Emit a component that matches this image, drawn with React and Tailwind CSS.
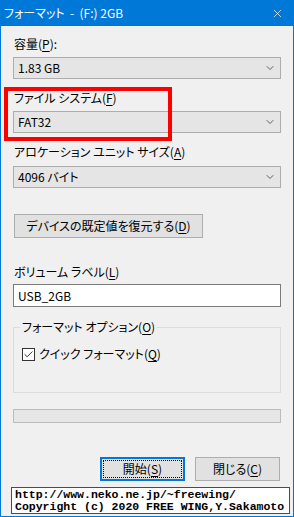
import { Check, ChevronDown, X } from 'lucide-react';

// Windows 10 "Format" dialog with an annotation box and copyright footer

const U = ({ children }) => <span className="underline underline-offset-2">{children}</span>;

function Combo({ value }) {
  return (
    <div className="flex h-[22px] items-center justify-between border border-[#adadad] bg-[#e5e5e5] pl-[4px] pr-[4px]">
      <span className="leading-none">{value}</span>
      <ChevronDown className="h-[12px] w-[12px] text-[#333]" strokeWidth={1.5} />
    </div>
  );
}

function Label({ children, className = '' }) {
  return <div className={`h-[16px] pl-[1px] leading-[16px] ${className}`}>{children}</div>;
}

export default function App() {
  return (
    <div className="relative flex h-[517px] w-[294px] flex-col border-x border-b border-[#0078d7] bg-[#f0f0f0] text-[12px] text-black [font-family:'Noto_Sans_CJK_JP','Noto_Sans',sans-serif] [font-feature-settings:'palt']">
      {/* title bar */}
      <div className="flex h-[26px] shrink-0 items-center justify-between bg-[#0078d7] pl-[3px] pr-[9px] text-white">
        <span className="leading-none">フォーマット&nbsp; -&nbsp; (F:) 2GB</span>
        <X className="h-[13px] w-[13px]" strokeWidth={1.3} />
      </div>

      <div className="flex flex-col px-[12px]">
        <Label className="mt-[10px]">
          容量(<U>P</U>):
        </Label>
        <div className="mt-[5px]">
          <Combo value="1.83 GB" />
        </div>

        <Label className="mt-[11px]">
          ファイル システム(<U>F</U>)
        </Label>
        <div className="mt-[5px]">
          <Combo value="FAT32" />
        </div>

        <Label className="mt-[11px]">
          アロケーション ユニット サイズ(<U>A</U>)
        </Label>
        <div className="mt-[6px]">
          <Combo value="4096 バイト" />
        </div>

        <button className="mt-[26px] ml-[1px] flex h-[24px] w-[189px] items-center justify-center border border-[#adadad] bg-[#e1e1e1]">
          デバイスの既定値を復元する(<U>D</U>)
        </button>

        <Label className="mt-[26px]">
          ボリューム ラベル(<U>L</U>)
        </Label>
        <div className="mt-[4px] flex h-[23px] items-center border border-[#7a7a7a] bg-white pl-[4px]">
          USB_2GB
        </div>

        {/* format options group */}
        <div className="relative mt-[20px] h-[66px] border border-[#dcdcdc]">
          <span className="absolute left-[6px] top-[-9px] bg-[#f0f0f0] px-[2px] leading-[16px]">
            フォーマット オプション(<U>O</U>)
          </span>
          <div className="mt-[18px] ml-[8px] flex items-center gap-[4px]">
            <span className="flex h-[13px] w-[13px] items-center justify-center border border-[#333] bg-white">
              <Check className="h-[11px] w-[11px] text-[#222]" strokeWidth={2} />
            </span>
            <span className="leading-[16px]">
              クイック フォーマット(<U>Q</U>)
            </span>
          </div>
        </div>

        {/* progress bar */}
        <div className="mt-[16px] h-[14px] border border-[#bcbcbc] bg-[#e6e6e6]" />

        <div className="mt-[34px] flex justify-end gap-[10px] pr-[1px]">
          <button className="flex h-[24px] w-[85px] items-center justify-center border-2 border-[#0078d7] bg-[#e1e1e1] p-[1px]">
            <span className="flex h-full w-full items-center justify-center border border-dotted border-black">
              開始(<U>S</U>)
            </span>
          </button>
          <button className="flex h-[24px] w-[85px] items-center justify-center border border-[#adadad] bg-[#e1e1e1]">
            閉じる(<U>C</U>)
          </button>
        </div>
      </div>

      {/* copyright footer */}
      <div className="mt-[6px] ml-[10px] flex h-[27px] w-[279px] flex-col justify-center overflow-hidden whitespace-nowrap border border-[#ff0000] bg-white pl-[3px] text-[11.5px] font-bold leading-[12px] [font-family:'Liberation_Mono',monospace] [font-feature-settings:normal]">
        <div>http://www.neko.ne.jp/~freewing/</div>
        <div>Copyright (c) 2020 FREE WING,Y.Sakamoto</div>
      </div>

      {/* red highlight annotation */}
      <div className="pointer-events-none absolute left-[3px] top-[87px] h-[54px] w-[168px] border-4 border-[#ff0000]" />
    </div>
  );
}
